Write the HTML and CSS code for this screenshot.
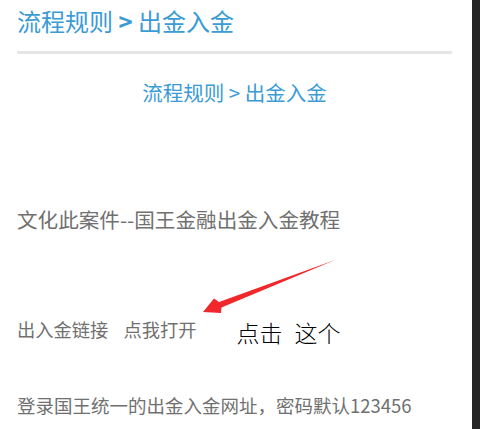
FILE: index.html
```html
<!DOCTYPE html>
<html lang="zh-CN">
<head>
  <meta charset="UTF-8">
  <meta name="viewport" content="width=device-width, initial-scale=1.0">
  <title>流程规则 > 出金入金</title>
  <link rel="stylesheet" href="styles.css">
</head>
<body>
  <div class="page">
    <div class="content">
      <h1 class="title">流程规则 <b>&gt;</b> 出金入金</h1>
      <div class="divider"></div>
      <h2 class="subtitle">流程规则 &gt; 出金入金</h2>
      <p class="lead">文化此案件--国王金融出金入金教程</p>
      <div class="link-row">
        <span class="label">出入金链接</span>
        <a class="open-link">点我打开</a>
        <span class="note">点击<span class="note-gap">这个</span></span>
        <svg class="arrow" width="140" height="60" viewBox="200 256 140 60">
          <polygon points="335,260 219,302 214,298.5 203,312 221,313 221.5,307.5" fill="#f0282b"/>
        </svg>
      </div>
      <p class="info">登录国王统一的出金入金网址，密码默认123456</p>
    </div>
    <div class="scrollbar"></div>
  </div>
</body>
</html>
```

FILE: styles.css
```css
body {
  margin: 0;
  padding: 0;
  background-color: #fff;
  font-family: "Noto Sans CJK SC", "Noto Sans", sans-serif;
}

.page {
  display: flex;
  height: 100vh;
}

.content {
  flex: 1;
  padding: 0 20px 0 17px;
}

.scrollbar {
  width: 8px;
  background-color: #262626;
}

.title {
  margin: 0;
  font-size: 24px;
  font-weight: normal;
  line-height: 42px;
  color: #3a9bd5;
}

.title b {
  font-weight: bold;
}

.divider {
  height: 3px;
  margin-top: 9px;
  background-color: #e6e6e6;
}

.subtitle {
  margin: 23px 0 0;
  font-size: 20.5px;
  font-weight: normal;
  line-height: 30px;
  text-align: center;
  color: #3a9bd5;
}

.lead {
  margin: 97px 0 0;
  font-size: 20.6px;
  line-height: 30px;
  color: #707070;
}

.link-row {
  position: relative;
  display: flex;
  align-items: baseline;
  margin-top: 78px;
  height: 30px;
  line-height: 30px;
  font-size: 18.3px;
  color: #707070;
}

.open-link {
  margin-left: 15px;
}

.note {
  margin-left: 40px;
  font-size: 23px;
  font-weight: 300;
  color: #000;
  position: relative;
  top: 5px;
}

.note-gap {
  margin-left: 12px;
}

.arrow {
  position: absolute;
  left: 183px;
  top: -56px;
}

.info {
  margin: 48px 0 0;
  font-size: 18.5px;
  line-height: 30px;
  color: #707070;
}
```
